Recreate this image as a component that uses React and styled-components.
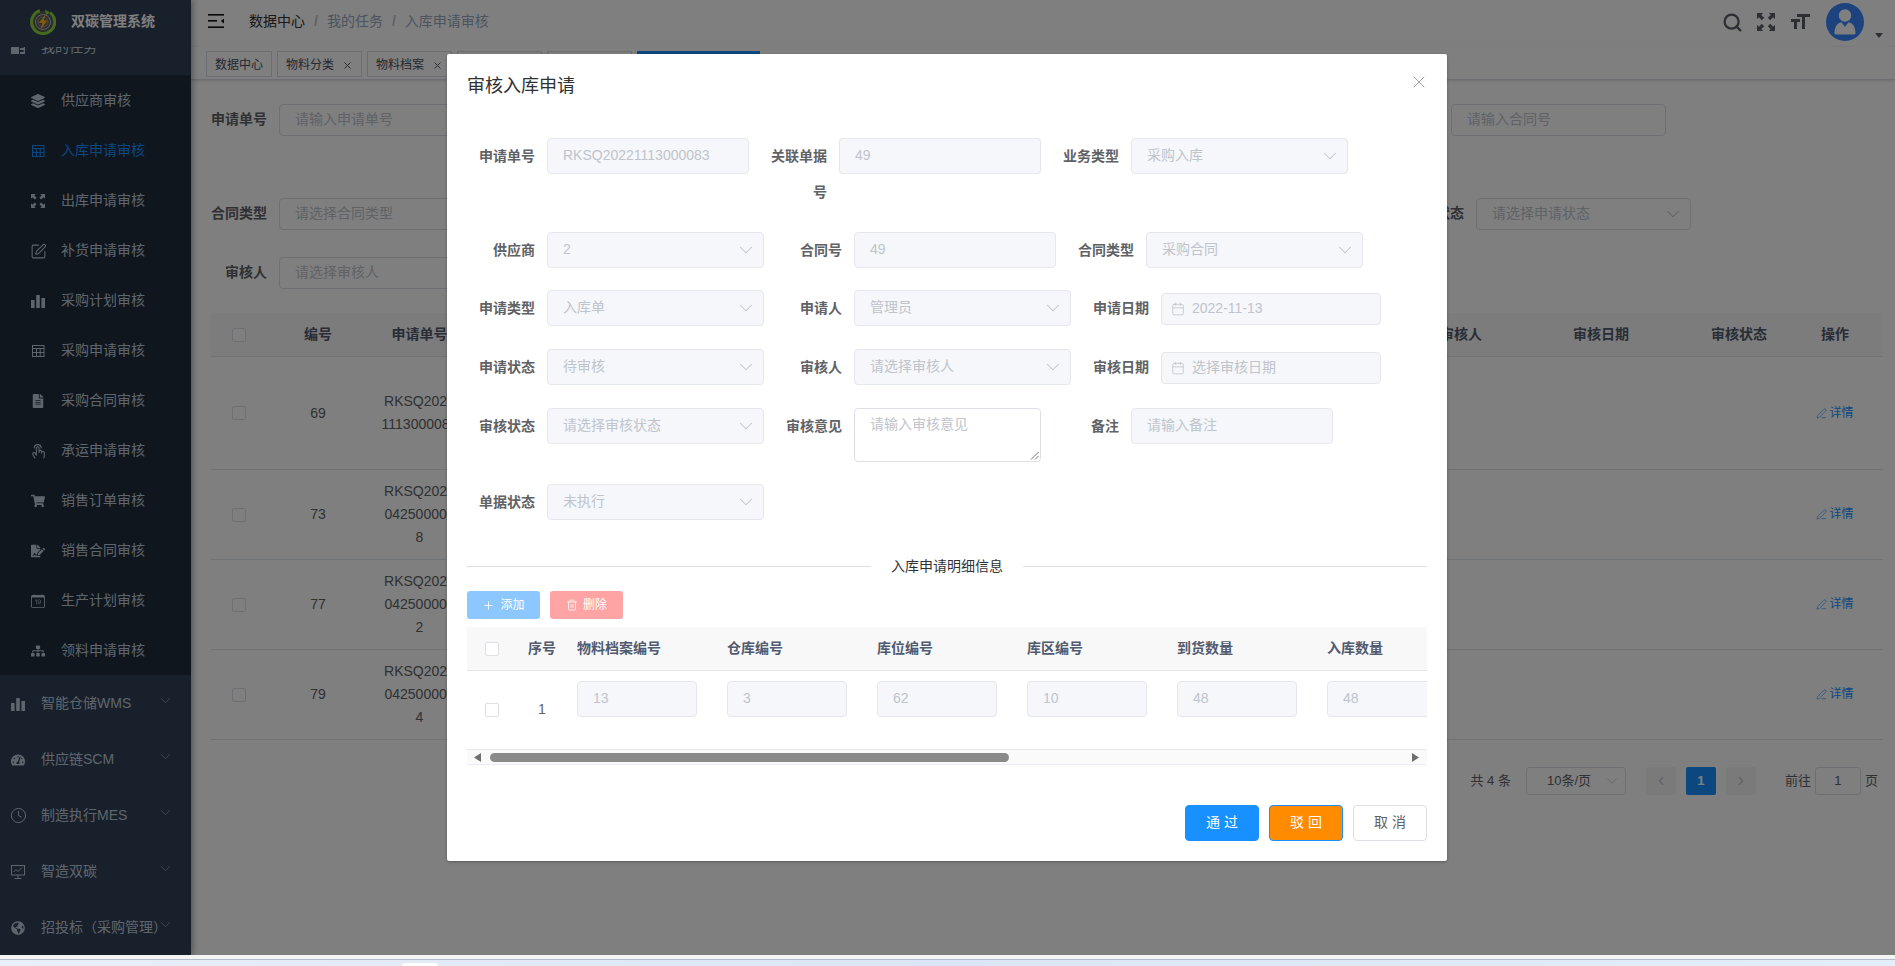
import React from 'react';
import styled, { createGlobalStyle } from 'styled-components';
import { FaLayerGroup, FaShoppingCart, FaSitemap, FaTachometerAlt, FaGlobeAmericas, FaFileAlt, FaFileSignature } from 'react-icons/fa';
import { PiHandTap } from 'react-icons/pi';
import { MdFormatSize } from 'react-icons/md';
import { BsCalendarDate } from 'react-icons/bs';
import { Search, SquarePen, Clock, PenLine, Plus, Trash2, X, ChevronDown, ChevronUp, ChevronLeft, ChevronRight, Calendar } from 'lucide-react';

const GlobalStyle = createGlobalStyle`
  html, body { margin: 0; padding: 0; width: 1895px; height: 966px; overflow: hidden; background: #fff; }
  body, button { font-family: "Liberation Sans", "Noto Sans CJK SC", sans-serif; line-height: 1.4; }
  * { box-sizing: border-box; }
`;

const Shell = styled.div`display: flex; flex-direction: column; width: 1895px; height: 966px; overflow: hidden;`;
const Page = styled.div`position: relative; display: flex; flex: none; height: 955px; overflow: hidden;`;

/* bottom browser strip */
const Strip = styled.div`
  flex: 1; position: relative; background: linear-gradient(90deg, #e9eff8, #dbe5f5 50%, #e4eef8);
  border-top: 4px solid #f4f4f4; box-shadow: inset 0 1px 0 #b4bccb;
`;
const StripTab = styled.div`position: absolute; left: 402px; bottom: 0; width: 36px; height: 3px; background: #fff; border-radius: 3px 3px 0 0;`;

/* sidebar */
const Sidebar = styled.aside`
  flex: none; width: 191px; display: flex; flex-direction: column; background: #304156; position: relative; box-shadow: 2px 0 6px rgba(0,21,41,.35); z-index: 1;
  svg.icon { flex: none; width: 14px; height: 14px; }
  svg.big { width: 17px; height: 17px; margin: 0 -1.5px; }
`;
const LogoBar = styled.div`flex: none; height: 47px; display: flex; align-items: center; padding: 0 0 3px 30px; gap: 15px; background: #304156; position: relative; z-index: 1;`;
const LogoTitle = styled.span`color: #fff; font-size: 14px; font-weight: 700; white-space: nowrap;`;
const MenuScroll = styled.div`flex: 1; overflow: hidden;`;
const Menu = styled.nav`margin-top: -28px;`;
const ParentItem = styled.div`
  position: relative; height: 56px; display: flex; align-items: center; padding: 1px 0 0 11px; gap: 16px;
  color: #bfcbd9; font-size: 14px; white-space: nowrap; background: #304156;
`;
const Chevron = styled.span`position: absolute; right: 17px; top: 17px; display: flex; color: #909aa6;`;
const SubMenu = styled.div`background: #1f2d3d;`;
const SubItem = styled.div`
  height: 50px; display: flex; align-items: center; padding: 2px 0 0 31px; gap: 16px; font-size: 14px; white-space: nowrap;
  color: ${p => (p.$active ? '#1890ff' : '#bfcbd9')};
`;

/* main */
const Main = styled.main`flex: 1; min-width: 0; display: flex; flex-direction: column; background: #fff;`;
const Header = styled.header`flex: none; height: 47px; display: flex; align-items: center; padding: 0 0 3px 17px; background: #fff; box-shadow: 0 1px 4px rgba(0,21,41,.08);`;
const MenuToggle = styled.span`display: flex; margin-bottom: 2px;`;
const Breadcrumb = styled.div`margin-left: 25px; display: flex; align-items: center; font-size: 14px; color: #97a8be;`;
const CrumbLink = styled.span`color: #303133;`;
const CrumbSep = styled.span`margin: 0 9px; color: #c0c4cc; font-weight: 700;`;
const Tools = styled.div`margin-left: auto; display: flex; align-items: center; padding-right: 31px;`;
const ToolBtn = styled.span`width: 34px; height: 38px; display: flex; align-items: center; justify-content: center; color: #5a5e66;`;
const AvatarWrap = styled.div`position: relative; margin-left: 9px; width: 38px; height: 38px;`;
const Caret = styled.span`position: absolute; right: -19px; top: 30px; width: 0; height: 0; border-left: 4px solid transparent; border-right: 4px solid transparent; border-top: 5px solid #5a5e66;`;

const TagsBar = styled.div`flex: none; height: 33px; display: flex; align-items: flex-start; gap: 5px; padding: 4px 0 0 15px; background: #fff; border-bottom: 1px solid #d8dce5; box-shadow: 0 1px 3px rgba(0,0,0,.12), 0 0 3px rgba(0,0,0,.04);`;
const Tag = styled.div`
  height: 26px; display: flex; align-items: center; padding: 2px 8px 0; font-size: 12px; white-space: nowrap;
  border: 1px solid ${p => (p.$active ? '#1890ff' : '#d8dce5')};
  background: ${p => (p.$active ? '#1890ff' : '#fff')};
  color: ${p => (p.$active ? '#fff' : '#495060')};
`;
const TagDot = styled.i`width: 8px; height: 8px; margin-right: 6px; border-radius: 50%; background: #fff;`;
const TagClose = styled(X)`margin-left: 8px; width: 11px; height: 11px; flex: none;`;

const Content = styled.div`flex: 1; padding: 24px 12px 0 20px;`;
const SearchRow = styled.div`display: flex; align-items: flex-start; gap: 10px; height: ${p => p.$h}px;`;
const SearchItem = styled.div`display: flex; align-items: flex-start;`;
const SearchLabel = styled.label`width: 68px; flex: none; padding-right: 12px; text-align: right; font-size: 14px; font-weight: 700; color: #606266; line-height: 30px;`;
const SearchBox = styled.div`
  position: relative; height: 32px; width: ${p => p.$w || 215}px; padding: 0 6px 0 15px; display: flex; align-items: center; justify-content: space-between;
  border: 1px solid #dcdfe6; border-radius: 4px; font-size: 14px; color: #c0c4cc; background: #fff; white-space: nowrap;
`;

const DataTable = styled.div`width: 1672px; font-size: 14px; color: #606266;`;
const colTemplate = '56px 102px 101px 941px 100px 180px 96px 96px';
const DataHead = styled.div`display: grid; grid-template-columns: ${colTemplate}; height: 44px; background: #f8f8f9; border-bottom: 1px solid #dfe6ec; font-weight: 700; color: #515a6e;`;
const DataRow = styled.div`display: grid; grid-template-columns: ${colTemplate}; height: ${p => p.$h}px; border-bottom: 1px solid #dfe6ec;`;
const DataCell = styled.div`display: flex; align-items: center; justify-content: center; text-align: center; line-height: 23px; overflow: hidden; white-space: pre;`;
const Check = styled.span`display: block; flex: none; width: 14px; height: 14px; border: 1px solid #dcdfe6; border-radius: 2px; background: #fff;`;
const DetailLink = styled.span`display: flex; align-items: center; gap: 2px; color: #1890ff; font-size: 12px;`;

const Pagination = styled.div`display: flex; align-items: center; justify-content: flex-end; margin: 27px 5px 0 0; height: 28px; font-size: 13px; color: #606266;`;
const PageSize = styled.div`position: relative; width: 100px; height: 28px; margin: 0 20px 0 15px; padding-left: 20px; display: flex; align-items: center; border: 1px solid #dcdfe6; border-radius: 3px; color: #606266;`;
const PageChevron = styled(ChevronDown)`position: absolute; right: 4px; top: 4px; color: #c0c4cc;`;
const PageBtn = styled.div`
  width: 30px; height: 28px; margin-right: ${p => p.$mr ?? 10}px; display: flex; align-items: center; justify-content: center; border-radius: 2px;
  background: ${p => (p.$active ? '#1890ff' : '#f4f4f5')}; color: ${p => (p.$active ? '#fff' : '#c0c4cc')}; font-weight: 700;
`;
const JumpInput = styled.div`width: 46px; height: 28px; margin: 0 4px; display: flex; align-items: center; justify-content: center; border: 1px solid #dcdfe6; border-radius: 3px;`;

/* dialog */
const Overlay = styled.div`position: absolute; inset: 0; z-index: 5; display: flex; justify-content: center; align-items: flex-start; padding: 54px 1px 0 0; background: rgba(0,0,0,.5);`;
const Modal = styled.section`width: 1000px; height: 807px; background: #fff; border-radius: 2px; box-shadow: 0 1px 3px rgba(0,0,0,.3);`;
const ModalHead = styled.div`display: flex; align-items: center; justify-content: space-between; padding: 20px 18px 10px 20px; height: 54px;`;
const ModalTitle = styled.h2`margin: 0; font-size: 18px; font-weight: 400; line-height: 24px; color: #303133;`;
const CloseIcon = styled(X)`color: #909399; margin-top: -8px;`;
const ModalBody = styled.div`padding: 30px 20px 30px;`;
const FormRow = styled.div`display: flex; align-items: flex-start; padding-bottom: ${p => p.$pad || 0}px;`;
const FormItem = styled.div`display: flex; align-items: flex-start; margin: 0 10px 22px 0;`;
const FormLabel = styled.label`flex: none; width: 80px; padding-left: 12px; padding-right: 12px; text-align: right; font-size: 14px; font-weight: 700; line-height: 36px; color: #606266;`;
const Disabled = styled.div`
  flex: none; display: flex; align-items: center; justify-content: space-between; width: ${p => p.$w}px; height: 36px; padding: 0 6px 0 15px;
  font-size: 14px; white-space: nowrap; color: #c0c4cc; background: #f5f7fa; border: 1px solid #e4e7ed; border-radius: 4px;
`;
const DateBox = styled(Disabled)`height: 32px; margin-top: 3px; justify-content: flex-start; padding-left: 9px; gap: 7px;`;
const TextArea = styled.div`position: relative; width: 187px; height: 54px; padding: 5px 15px; font-size: 14px; line-height: 21px; color: #c0c4cc; background: #fff; border: 1px solid #dcdfe6; border-radius: 4px;`;
const Grip = styled.svg`position: absolute; right: 1px; bottom: 1px;`;
const Divider = styled.div`display: flex; align-items: center; margin: 24px 0; height: 1px; font-size: 14px; color: #303133; &::before, &::after { content: ""; flex: 1; height: 1px; background: #dcdfe6; }`;
const DividerText = styled.span`padding: 0 20px;`;
const ToolRow = styled.div`display: flex; gap: 10px; margin-bottom: 8px;`;
const MiniBtn = styled.div`width: 73px; height: 28px; display: flex; align-items: center; justify-content: center; gap: 5px; border-radius: 3px; color: #fff; font-size: 12px; background: ${p => p.$bg};`;

const SubTable = styled.div`width: 960px; overflow: hidden;`;
const subCols = '50px 50px repeat(6, 150px)';
const SubHead = styled.div`display: grid; grid-template-columns: ${subCols}; width: 1000px; height: 44px; align-items: center; background: #f8f8f9; border-bottom: 1px solid #dfe6ec; font-size: 14px; font-weight: 700; color: #515a6e;`;
const SubRow = styled.div`display: grid; grid-template-columns: ${subCols}; width: 1000px; height: 78px; align-items: center; font-size: 14px; color: #606266;`;
const Center = styled.div`display: flex; justify-content: center; align-items: center;`;
const SubCell = styled.div`padding-left: 10px; white-space: nowrap;`;
const SubInputCell = styled(SubCell)`align-self: start; padding-top: 10px;`;
const SubInput = styled(Disabled)`width: 120px;`;
const ScrollTrack = styled.div`display: flex; align-items: center; height: 16px; padding: 0 8px 0 7px; background: #fafafa; border-top: 1px solid #e8e8e8; border-bottom: 1px solid #ebeef5;`;
const ScrollThumb = styled.div`width: 519px; height: 9px; margin-left: 8px; border-radius: 5px; background: #8a8a8a;`;
const ScrollArrow = styled.svg`flex: none; margin-left: ${p => (p.$end ? 'auto' : 0)};`;

const ModalFoot = styled.div`display: flex; justify-content: flex-end; gap: 10px; padding: 10px 20px 20px;`;
const FootBtn = styled.div`
  width: 74px; height: 36px; display: flex; align-items: center; justify-content: center; border-radius: 4px; font-size: 14px; white-space: pre;
  background: ${p => p.$bg}; color: ${p => p.$fg}; border: 1px solid ${p => p.$bd};
`;

const BarsIcon = () => (
  <svg className="icon" viewBox="0 0 14 14" fill="currentColor"><rect x="0" y="6" width="3.6" height="8" /><rect x="5.2" y="1" width="3.6" height="13" /><rect x="10.4" y="4" width="3.6" height="10" /></svg>
);
const GridIcon = () => (
  <svg className="icon" viewBox="0 0 14 14" fill="none" stroke="currentColor" strokeWidth="1"><rect x="1.5" y="1.5" width="11.5" height="11" /><path d="M1.500 4.500h11.500M1.500 8.500h11.500M5.500 4.500v8M9.200 4.500v8" /></svg>
);
const ExpandIcon = ({ size }) => (
  <svg className={size ? undefined : 'icon'} width={size} height={size} viewBox="0 0 16 16" fill="currentColor">
    {[0, 90, 180, 270].map(a => (
      <path key={a} transform={`rotate(${a} 8 8)`} d="M0 0h5.500L3.800 1.700 6.400 4.300 4.300 6.400 1.700 3.800 0 5.500z" />
    ))}
  </svg>
);
const MonitorIcon = () => (
  <svg className="icon" viewBox="0 0 14 14" fill="none" stroke="currentColor" strokeWidth="1"><rect x="0.5" y="0.5" width="13" height="9.500" /><path d="M7 10v3M3.500 13.500h7M2.500 7l2.500-2.500L7 6.500l4-4" /></svg>
);
const CardIcon = () => (
  <svg className="icon" viewBox="0 0 14 14" fill="currentColor"><rect x="0" y="1" width="8" height="12" /><path d="M9 1h5v12H9V11h3.600V9H9V7h3.600V5H9z" /></svg>
);
const Hamburger = () => (
  <svg width="16" height="14" viewBox="0 0 16 14" fill="#111"><rect width="16" height="1.600" /><rect y="6" width="9" height="1.600" /><rect y="12.400" width="16" height="1.600" /><path d="M16 4.400v5l-3.200-2.500z" /></svg>
);
const Logo = () => (
  <svg width="26" height="26" viewBox="0 0 26 26" fill="none">
    <circle cx="13" cy="13" r="11" fill="#5b5b5b" />
    <path d="M20 3.600A11.600 11.600 0 1 1 10 1.800" stroke="#8ed63a" strokeWidth="3" />
    <path d="M15 .8l5 2.400-4 3z" fill="#8ed63a" />
    <circle cx="13" cy="13" r="7.500" stroke="#bdbdbd" strokeWidth="1" />
    <circle cx="13" cy="13" r="5" stroke="#9a9a9a" strokeWidth="1" />
    <path d="M15.500 5.500 8.600 14h3.600l-1.600 6.500 7-9h-3.700z" fill="#ffb31a" />
  </svg>
);
const Avatar = () => (
  <svg width="38" height="38" viewBox="0 0 38 38">
    <circle cx="19" cy="19" r="19" fill="#3a86ff" />
    <circle cx="19" cy="12.500" r="6.200" fill="#fff" />
    <path d="M8.500 30c0-6.600 3-10 7-10.800L19 24l3.500-4.800c4 .8 7 4.200 7 10.800 0 1-.8 1.600-2 1.600h-17c-1.200 0-2-.6-2-1.600z" fill="#fff" />
  </svg>
);

const subItems = [
  ['供应商审核', <FaLayerGroup className="icon" />],
  ['入库申请审核', <GridIcon />, true],
  ['出库申请审核', <ExpandIcon />],
  ['补货申请审核', <SquarePen className="icon big" strokeWidth={1.5} />],
  ['采购计划审核', <BarsIcon />],
  ['采购申请审核', <GridIcon />],
  ['采购合同审核', <FaFileAlt className="icon" />],
  ['承运申请审核', <PiHandTap className="icon big" />],
  ['销售订单审核', <FaShoppingCart className="icon" />],
  ['销售合同审核', <FaFileSignature className="icon" />],
  ['生产计划审核', <BsCalendarDate className="icon" />],
  ['领料申请审核', <FaSitemap className="icon" />],
];
const parents = [
  ['智能仓储WMS', <BarsIcon />],
  ['供应链SCM', <FaTachometerAlt className="icon" />],
  ['制造执行MES', <Clock className="icon big" strokeWidth={1.4} />],
  ['智造双碳', <MonitorIcon />],
  ['招投标（采购管理）', <FaGlobeAmericas className="icon" />],
];
const tags = [['数据中心'], ['物料分类', 1], ['物料档案', 1], ['仓库管理', 1], ['库位管理', 1]];

const formRows = [
  { items: [['申请单号', 'input', 'RKSQ20221113000083', 202], ['关联单据号', 'input', '49', 202], ['业务类型', 'select', '采购入库', 217]] },
  { items: [['供应商', 'select', '2', 217], ['合同号', 'input', '49', 202], ['合同类型', 'select', '采购合同', 217]] },
  { pad: 1, items: [['申请类型', 'select', '入库单', 217], ['申请人', 'select', '管理员', 217], ['申请日期', 'date', '2022-11-13', 220]] },
  { pad: 1, items: [['申请状态', 'select', '待审核', 217], ['审核人', 'select', '请选择审核人', 217], ['审核日期', 'date', '选择审核日期', 220]] },
  { items: [['审核状态', 'select', '请选择审核状态', 217], ['审核意见', 'area', '请输入审核意见'], ['备注', 'input', '请输入备注', 202]] },
  { items: [['单据状态', 'select', '未执行', 217]] },
];

const FormControl = ({ kind, value, width }) => {
  if (kind === 'area') {
    return (
      <TextArea>
        {value}
        <Grip width="9" height="9" viewBox="0 0 9 9" stroke="#777" strokeWidth="1"><path d="M1 8.500 8.500 1M5 8.500 8.500 5" /></Grip>
      </TextArea>
    );
  }
  if (kind === 'date') {
    return <DateBox $w={width}><Calendar size={14} strokeWidth={1.4} />{value}</DateBox>;
  }
  return (
    <Disabled $w={width}>
      {value}
      {kind === 'select' && <ChevronDown size={22} strokeWidth={1.1} />}
    </Disabled>
  );
};

const searchRows = [
  { h: 94, items: [['申请单号', '请输入申请单号'], ['关联单据号', '请输入关联单据号'], ['业务类型', '请选择业务类型', 1], ['供应商', '请选择供应商', 1], ['合同号', '请输入合同号']] },
  { h: 59, items: [['合同类型', '请选择合同类型', 1, 215], ['申请类型', '请选择申请类型', 1, 215], ['申请人', '请选择申请人', 1, 215], ['申请日期', '选择申请日期', 0, 240], ['申请状态', '请选择申请状态', 1, 215]] },
  { h: 56, items: [['审核人', '请选择审核人', 1]] },
];

const dataRows = [
  ['69', 'RKSQ2022\n1113000083', 113],
  ['73', 'RKSQ2023\n042500000\n8', 90],
  ['77', 'RKSQ2023\n042500000\n2', 90],
  ['79', 'RKSQ2023\n042500000\n4', 90],
];

const subColumns = ['物料档案编号', '仓库编号', '库位编号', '库区编号', '到货数量', '入库数量'];
const subValues = ['13', '3', '62', '10', '48', '48'];

export default function App() {
  return (
    <Shell>
      <GlobalStyle />
      <Page>
        <Sidebar>
          <LogoBar><Logo /><LogoTitle>双碳管理系统</LogoTitle></LogoBar>
          <MenuScroll>
            <Menu>
              <ParentItem><CardIcon />我的任务<Chevron><ChevronUp size={17} strokeWidth={1.1} /></Chevron></ParentItem>
              <SubMenu>
                {subItems.map(([t, icon, active]) => <SubItem key={t} $active={active}>{icon}{t}</SubItem>)}
              </SubMenu>
              {parents.map(([t, icon]) => (
                <ParentItem key={t}>{icon}{t}<Chevron><ChevronDown size={17} strokeWidth={1.1} /></Chevron></ParentItem>
              ))}
            </Menu>
          </MenuScroll>
        </Sidebar>
        <Main>
          <Header>
            <MenuToggle><Hamburger /></MenuToggle>
            <Breadcrumb>
              <CrumbLink>数据中心</CrumbLink><CrumbSep>/</CrumbSep>我的任务<CrumbSep>/</CrumbSep>入库申请审核
            </Breadcrumb>
            <Tools>
              <ToolBtn><Search size={21} strokeWidth={2.6} /></ToolBtn>
              <ToolBtn><ExpandIcon size={18} /></ToolBtn>
              <ToolBtn><MdFormatSize size={24} /></ToolBtn>
              <AvatarWrap><Avatar /><Caret /></AvatarWrap>
            </Tools>
          </Header>
          <TagsBar>
            {tags.map(([t, c]) => <Tag key={t}>{t}{c && <TagClose strokeWidth={2} />}</Tag>)}
            <Tag $active><TagDot />入库申请审核<TagClose strokeWidth={2} /></Tag>
          </TagsBar>
          <Content>
            {searchRows.map((row, i) => (
              <SearchRow key={i} $h={row.h}>
                {row.items.map(([l, ph, sel, w]) => (
                  <SearchItem key={l}>
                    <SearchLabel>{l}</SearchLabel>
                    <SearchBox $w={w}>{ph}{sel ? <ChevronDown size={22} strokeWidth={1.1} /> : null}</SearchBox>
                  </SearchItem>
                ))}
              </SearchRow>
            ))}
            <DataTable>
              <DataHead>
                <DataCell><Check /></DataCell>
                <DataCell>编号</DataCell>
                <DataCell>申请单号</DataCell>
                <DataCell />
                <DataCell>审核人</DataCell>
                <DataCell>审核日期</DataCell>
                <DataCell>审核状态</DataCell>
                <DataCell>操作</DataCell>
              </DataHead>
              {dataRows.map(([id, code, h]) => (
                <DataRow key={id} $h={h}>
                  <DataCell><Check /></DataCell>
                  <DataCell>{id}</DataCell>
                  <DataCell>{code}</DataCell>
                  <DataCell />
                  <DataCell />
                  <DataCell />
                  <DataCell />
                  <DataCell><DetailLink><PenLine size={11} strokeWidth={1.3} />详情</DetailLink></DataCell>
                </DataRow>
              ))}
            </DataTable>
            <Pagination>
              <span>共 4 条</span>
              <PageSize>10条/页<PageChevron size={18} strokeWidth={1.1} /></PageSize>
              <PageBtn><ChevronLeft size={14} /></PageBtn>
              <PageBtn $active>1</PageBtn>
              <PageBtn $mr={29}><ChevronRight size={14} /></PageBtn>
              <span>前往</span>
              <JumpInput>1</JumpInput>
              <span>页</span>
            </Pagination>
          </Content>
        </Main>
        <Overlay>
          <Modal>
            <ModalHead>
              <ModalTitle>审核入库申请</ModalTitle>
              <CloseIcon size={20} strokeWidth={1} />
            </ModalHead>
            <ModalBody>
              {formRows.map((row, i) => (
                <FormRow key={i} $pad={row.pad}>
                  {row.items.map(([label, kind, value, width]) => (
                    <FormItem key={label}>
                      <FormLabel>{label}</FormLabel>
                      <FormControl kind={kind} value={value} width={width} />
                    </FormItem>
                  ))}
                </FormRow>
              ))}
              <Divider><DividerText>入库申请明细信息</DividerText></Divider>
              <ToolRow>
                <MiniBtn $bg="#8cc8ff"><Plus size={13} strokeWidth={1.5} />添加</MiniBtn>
                <MiniBtn $bg="#ffa4a4"><Trash2 size={12} strokeWidth={1.5} />删除</MiniBtn>
              </ToolRow>
              <SubTable>
                <SubHead>
                  <Center><Check /></Center>
                  <Center>序号</Center>
                  {subColumns.map(c => <SubCell key={c}>{c}</SubCell>)}
                </SubHead>
                <SubRow>
                  <Center><Check /></Center>
                  <Center>1</Center>
                  {subValues.map((v, i) => <SubInputCell key={i}><SubInput>{v}</SubInput></SubInputCell>)}
                </SubRow>
                <ScrollTrack>
                  <ScrollArrow width="8" height="9" viewBox="0 0 8 9" fill="#6f6f6f"><path d="M7 0v9L0 4.500z" /></ScrollArrow>
                  <ScrollThumb />
                  <ScrollArrow $end width="8" height="9" viewBox="0 0 8 9" fill="#6f6f6f"><path d="M1 0v9l7-4.500z" /></ScrollArrow>
                </ScrollTrack>
              </SubTable>
            </ModalBody>
            <ModalFoot>
              <FootBtn $bg="#1890ff" $fg="#fff" $bd="#1890ff">通 过</FootBtn>
              <FootBtn $bg="#ff8c00" $fg="#fff" $bd="#1890ff">驳 回</FootBtn>
              <FootBtn $bg="#fff" $fg="#606266" $bd="#dcdfe6">取 消</FootBtn>
            </ModalFoot>
          </Modal>
        </Overlay>
      </Page>
      <Strip><StripTab /></Strip>
    </Shell>
  );
}
